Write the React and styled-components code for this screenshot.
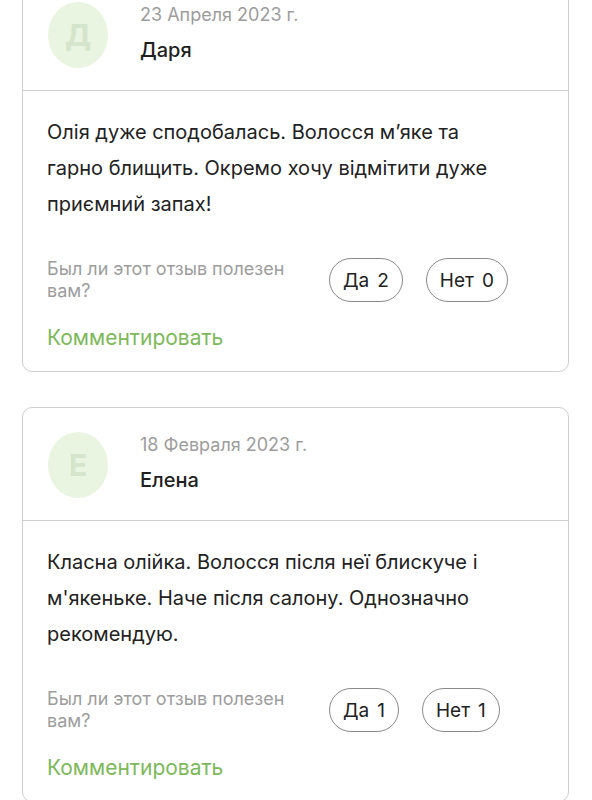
import styled, { createGlobalStyle } from "styled-components";

const Global = createGlobalStyle`
  html, body {
    margin: 0;
    padding: 0;
    background: #fff;
    font-family: "Inter", "Open Sans", sans-serif;
    -webkit-font-smoothing: antialiased;
  }
`;

const Lista = styled.div`
  display: flex;
  flex-direction: column;
  gap: 35px;
  padding: 0 23px 0 22px;
  margin-top: -23px;
`;

const Tarjeta = styled.div`
  border: 1px solid #cfcfcf;
  border-radius: 10px;
  background: #fff;
`;

const Cabecera = styled.div`
  display: flex;
  align-items: flex-start;
  gap: 32px;
  height: 113px;
  box-sizing: border-box;
  padding: 24px 24px 0 25px;
  border-bottom: 1px solid #cfcfcf;
`;

const Avatar = styled.div`
  width: 60px;
  height: 66px;
  border-radius: 50%;
  background: #e9f4e1;
  color: #d4e5cb;
  display: flex;
  align-items: center;
  justify-content: center;
  font-size: 30px;
  font-weight: 700;
  flex-shrink: 0;
`;

const Autor = styled.div`
  display: flex;
  flex-direction: column;
  gap: 12px;
  padding-top: 2px;
`;

const Fecha = styled.div`
  font-size: 18px;
  color: #9d9d9d;
  line-height: 22px;
`;

const Nombre = styled.div`
  font-size: 20px;
  font-weight: 500;
  color: #1f1f1f;
  line-height: 24px;
`;

const Cuerpo = styled.div`
  padding: 23px 24px 20px 24px;
`;

const Texto = styled.p`
  margin: 0;
  max-width: 470px;
  font-size: 20px;
  line-height: 36px;
  color: #222;
`;

const Utilidad = styled.div`
  display: flex;
  align-items: center;
  margin-top: 36px;
`;

const Pregunta = styled.div`
  width: 282px;
  box-sizing: border-box;
  padding-right: 24px;
  font-size: 18px;
  line-height: 22px;
  color: #9d9d9d;
`;

const Votos = styled.div`
  display: flex;
  gap: 23px;
`;

const Voto = styled.button`
  height: 44px;
  padding: 0 13px;
  border: 1px solid #8a8a8a;
  border-radius: 22px;
  background: #fff;
  font-family: inherit;
  font-size: 19px;
  color: #222;
  display: flex;
  align-items: center;
  gap: 8px;
`;

const Comentar = styled.a`
  display: block;
  margin-top: 23px;
  font-size: 21px;
  line-height: 26px;
  color: #7db95a;
  text-decoration: none;
`;

const resenas = [
  {
    letra: "Д",
    fecha: "23 Апреля 2023 г.",
    nombre: "Даря",
    texto:
      "Олія дуже сподобалась. Волосся м’яке та гарно блищить. Окремо хочу відмітити дуже приємний запах!",
    si: 2,
    no: 0,
  },
  {
    letra: "Е",
    fecha: "18 Февраля 2023 г.",
    nombre: "Елена",
    texto:
      "Класна олійка. Волосся після неї блискуче і м'якеньке. Наче після салону. Однозначно рекомендую.",
    si: 1,
    no: 1,
  },
];

const App = () => {
  return (
    <>
      <Global />
      <Lista>
        {resenas.map((r) => (
          <Tarjeta key={r.nombre}>
            <Cabecera>
              <Avatar>{r.letra}</Avatar>
              <Autor>
                <Fecha>{r.fecha}</Fecha>
                <Nombre>{r.nombre}</Nombre>
              </Autor>
            </Cabecera>
            <Cuerpo>
              <Texto>{r.texto}</Texto>
              <Utilidad>
                <Pregunta>Был ли этот отзыв полезен вам?</Pregunta>
                <Votos>
                  <Voto type="button">
                    <span>Да</span>
                    <span>{r.si}</span>
                  </Voto>
                  <Voto type="button">
                    <span>Нет</span>
                    <span>{r.no}</span>
                  </Voto>
                </Votos>
              </Utilidad>
              <Comentar href="">Комментировать</Comentar>
            </Cuerpo>
          </Tarjeta>
        ))}
      </Lista>
    </>
  );
};

export default App;
